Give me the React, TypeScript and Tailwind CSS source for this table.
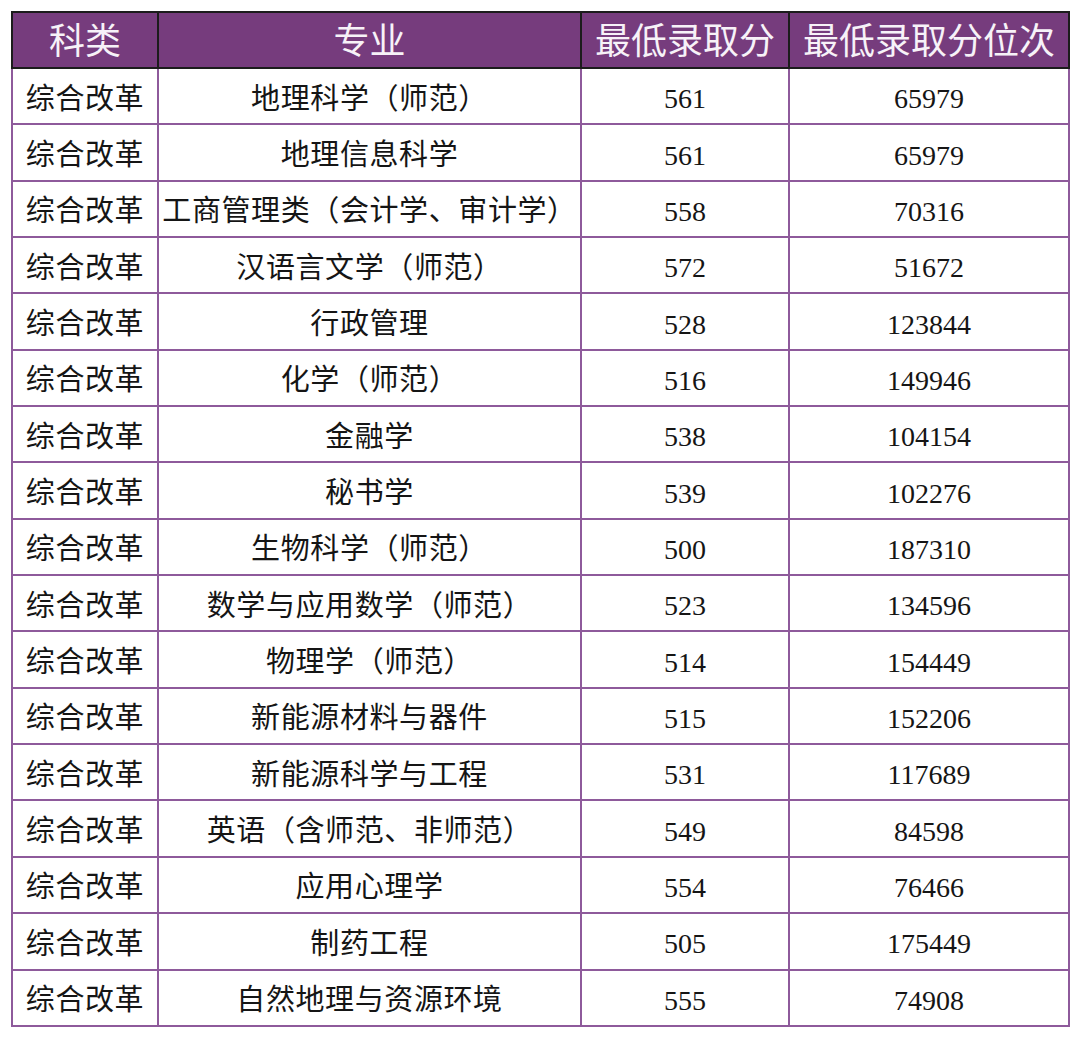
const rows: [string, string, string][] = [
  ["地理科学（师范）", "561", "65979"],
  ["地理信息科学", "561", "65979"],
  ["工商管理类（会计学、审计学）", "558", "70316"],
  ["汉语言文学（师范）", "572", "51672"],
  ["行政管理", "528", "123844"],
  ["化学（师范）", "516", "149946"],
  ["金融学", "538", "104154"],
  ["秘书学", "539", "102276"],
  ["生物科学（师范）", "500", "187310"],
  ["数学与应用数学（师范）", "523", "134596"],
  ["物理学（师范）", "514", "154449"],
  ["新能源材料与器件", "515", "152206"],
  ["新能源科学与工程", "531", "117689"],
  ["英语（含师范、非师范）", "549", "84598"],
  ["应用心理学", "554", "76466"],
  ["制药工程", "505", "175449"],
  ["自然地理与资源环境", "555", "74908"],
];

const headCell =
  "border-2 border-[#1c1c1c] bg-[#763c7d] p-0 pt-[5px] text-center align-middle text-[36px] leading-tight font-normal text-[#f7f2f8]";
const bodyCell = "border-2 border-[#8e5a9b] p-0 pt-[5px] text-center align-middle leading-tight";
const textCell = `${bodyCell} text-[29px] tracking-[0.6px]`;
const numCell = `${bodyCell} text-[28px]`;

export default function App() {
  return (
    <div
      className="min-h-[1038px] w-[1080px] bg-white pl-[11px] pt-[11px]"
      style={{ fontFamily: '"Liberation Serif", "Noto Sans CJK SC", serif' }}
    >
      <table className="table-fixed border-collapse text-[#151515]">
        <colgroup>
          <col className="w-[146px]" />
          <col className="w-[423px]" />
          <col className="w-[208px]" />
          <col className="w-[280px]" />
        </colgroup>
        <thead>
          <tr className="h-[56px]">
            <th className={headCell}>科类</th>
            <th className={headCell}>专业</th>
            <th className={headCell}>最低录取分</th>
            <th className={headCell}>最低录取分位次</th>
          </tr>
        </thead>
        <tbody>
          {rows.map(([major, score, rank], i) => (
            <tr key={i} className="h-[56.35px]">
              <td className={textCell}>综合改革</td>
              <td className={textCell}>{major}</td>
              <td className={numCell}>{score}</td>
              <td className={numCell}>{rank}</td>
            </tr>
          ))}
        </tbody>
      </table>
    </div>
  );
}
